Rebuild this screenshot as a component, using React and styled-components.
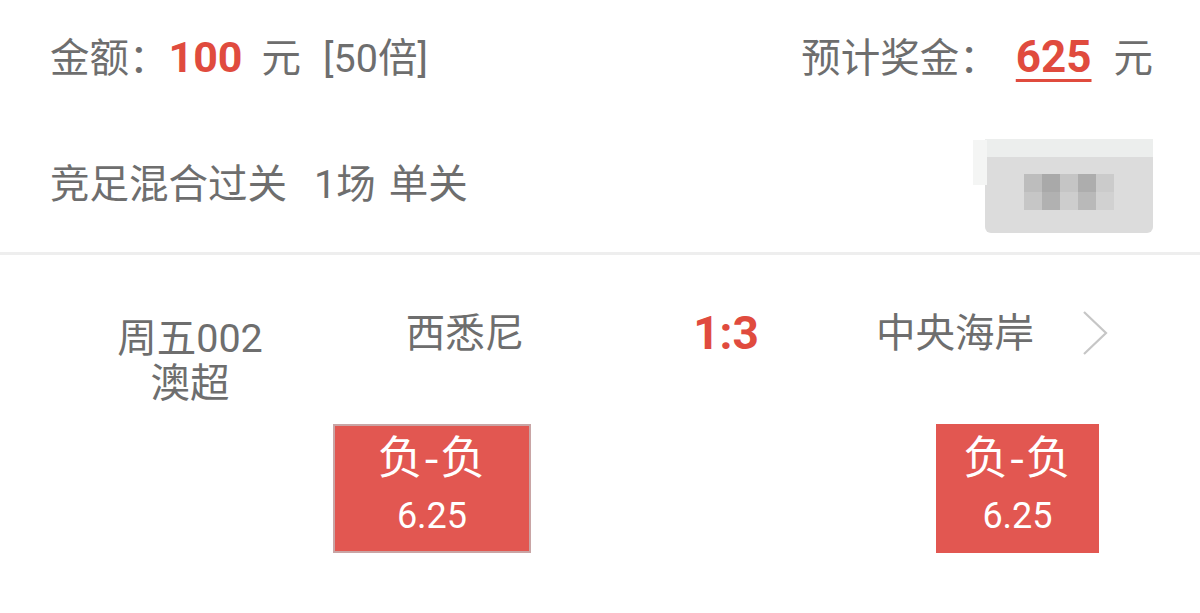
import React from "react";
import styled, { createGlobalStyle } from "styled-components";

const Global = createGlobalStyle`
  html, body { margin: 0; padding: 0; background: #ffffff; }
  body { font-family: Roboto, "Noto Sans CJK SC", sans-serif; color: #6e6e6e; }
`;

const Page = styled.div`
  width: 1200px;
  height: 613px;
  overflow: hidden;
  background: #fff;
`;

const Header = styled.div`
  padding: 0 47px 0 50px;
`;

const SummaryRow = styled.div`
  height: 116px;
  display: flex;
  align-items: center;
  justify-content: space-between;
`;

const Group = styled.div`
  display: flex;
  align-items: baseline;
  font-size: 39.5px;
  line-height: 45px;
  white-space: pre;
`;

const Amount = styled.span`
  font-family: Roboto, sans-serif;
  font-weight: 700;
  font-size: ${(p) => p.$size || 43}px;
  color: #e04b3e;
  margin-left: ${(p) => p.$left || 0}px;
  text-decoration: ${(p) => (p.$underline ? "underline" : "none")};
  text-decoration-thickness: 3px;
  text-underline-offset: 7px;
`;

const Chunk = styled.span`
  margin-left: ${(p) => p.$left || 0}px;
`;

const PlayRow = styled.div`
  height: 136px;
  display: flex;
  align-items: center;
  justify-content: space-between;
`;

const PlayText = styled.div`
  display: flex;
  font-size: 39.5px;
  line-height: 45px;
  white-space: pre;
`;

const BlurredButton = styled.div`
  position: relative;
  width: 168px;
  height: 94px;
  margin-top: 4px;
  background: #dcdcdc;
  border-radius: 0 0 6px 6px;
  display: flex;
  align-items: center;
  justify-content: center;
  &::before {
    content: "";
    position: absolute;
    left: 0;
    right: 0;
    top: 0;
    height: 18px;
    background: #eceeed;
  }
  &::after {
    content: "";
    position: absolute;
    left: -12px;
    top: 1px;
    width: 14px;
    height: 45px;
    background: #f4f5f4;
  }
`;

const Pixels = styled.div`
  display: grid;
  grid-template-columns: repeat(5, 18px);
  grid-auto-rows: 18px;
  margin-top: 12px;
`;

const Pixel = styled.div`
  background: ${(p) => p.$c};
`;

const Divider = styled.div`
  height: 3px;
  background: #eeeeee;
`;

const Match = styled.div`
  padding-top: 56px;
`;

const MatchTop = styled.div`
  display: flex;
  align-items: flex-start;
  padding-left: 50px;
`;

const League = styled.div`
  width: 280px;
  margin-top: 5px;
  text-align: center;
  font-size: 39.5px;
  line-height: 45px;
`;

const Team = styled.div`
  width: ${(p) => p.$w}px;
  text-align: center;
  font-size: 39.5px;
  line-height: 45px;
`;

const Score = styled.div`
  width: 252px;
  text-align: center;
  font-family: Roboto, sans-serif;
  font-weight: 700;
  font-size: 46px;
  line-height: 45px;
  color: #e04b3e;
`;

const Chevron = styled.svg`
  margin-left: 23px;
  margin-top: -1px;
`;

const Picks = styled.div`
  display: flex;
  justify-content: space-between;
  padding: 0 101px 0 333px;
  margin-top: 18px;
`;

const Pick = styled.div`
  box-sizing: border-box;
  width: ${(p) => p.$w}px;
  height: 129px;
  background: #e25751;
  border: ${(p) => (p.$bordered ? "2px solid #c9a5a5" : "none")};
  color: #fff;
  display: flex;
  flex-direction: column;
  align-items: center;
  padding-top: ${(p) => (p.$bordered ? 4 : 6)}px;
`;

const PickName = styled.div`
  font-family: "Noto Sans CJK SC", sans-serif;
  font-size: 45px;
  line-height: 50px;
  letter-spacing: 1px;
`;

const PickOdds = styled.div`
  font-family: Roboto, sans-serif;
  font-size: 36px;
  line-height: 44px;
  margin-top: 14px;
`;

const pixelColors = [
  "#bdbdbd", "#a9a9a9", "#c5c5c5", "#adadad", "#cbcbcb",
  "#c6c6c6", "#b1b1b1", "#cdcdcd", "#b9b9b9", "#d1d1d1",
];

export default function App() {
  return (
    <Page>
      <Global />
      <Header>
        <SummaryRow>
          <Group>
            <span>金额：</span>
            <Amount>100</Amount>
            <Chunk $left={19}>元</Chunk>
            <Chunk $left={22}>[50倍]</Chunk>
          </Group>
          <Group>
            <span>预计奖金：</span>
            <Amount $left={17} $size={44} $underline>625</Amount>
            <Chunk $left={22}>元</Chunk>
          </Group>
        </SummaryRow>
        <PlayRow>
          <PlayText>
            <span>竞足混合过关</span>
            <Chunk $left={27}>1场</Chunk>
            <Chunk $left={13}>单关</Chunk>
          </PlayText>
          <BlurredButton>
            <Pixels>
              {pixelColors.map((c, i) => (
                <Pixel key={i} $c={c} />
              ))}
            </Pixels>
          </BlurredButton>
        </PlayRow>
      </Header>
      <Divider />
      <Match>
        <MatchTop>
          <League>
            周五002
            <br />
            澳超
          </League>
          <Team $w={270}>西悉尼</Team>
          <Score>1:3</Score>
          <Team $w={206}>中央海岸</Team>
          <Chevron width="30" height="46" viewBox="0 0 30 46">
            <polyline
              points="3,2 25,23 3,44"
              fill="none"
              stroke="#c6c6c6"
              strokeWidth="2.2"
            />
          </Chevron>
        </MatchTop>
        <Picks>
          <Pick $w={198} $bordered>
            <PickName>负-负</PickName>
            <PickOdds>6.25</PickOdds>
          </Pick>
          <Pick $w={163}>
            <PickName>负-负</PickName>
            <PickOdds>6.25</PickOdds>
          </Pick>
        </Picks>
      </Match>
    </Page>
  );
}
